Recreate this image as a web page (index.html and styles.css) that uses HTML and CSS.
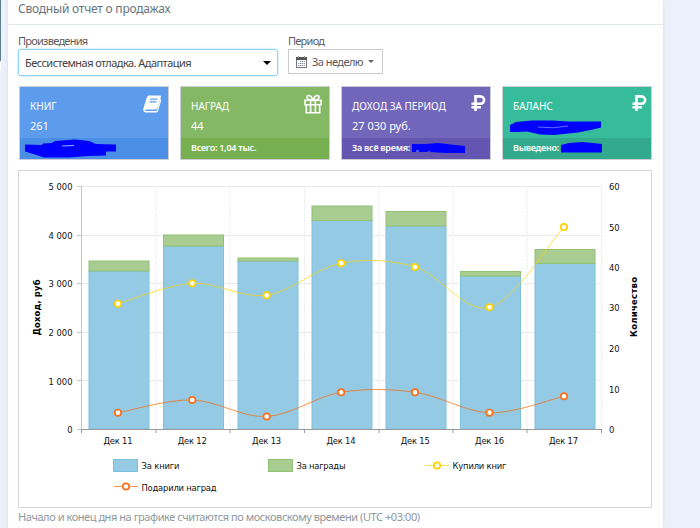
FILE: index.html
```
<!DOCTYPE html>
<html lang="ru">

	<head>
		<meta charset="UTF-8">
		<title>Сводный отчет о продажах</title>
		<link rel="stylesheet" href="styles.css">
	</head>

	<body>
		<div class="side"></div>
		<div class="panel">
			<div class="panel-head"><span class="panel-title">Сводный отчет о продажах</span></div>
			<div class="panel-body">
				<div class="filters">
					<div class="field">
						<label>Произведения</label>
						<div class="select">
							<span>Бессистемная отладка. Адаптация</span>
							<i class="caret"></i>
						</div>
					</div>
					<div class="field">
						<label>Период</label>
						<div class="period">
							<svg class="calendar" width="11" height="12" viewBox="0 0 11 12">
								<rect x="0.5" y="1.5" width="10" height="10" fill="#fff" stroke="#777" />
								<path d="M0 2.5h11" stroke="#555" stroke-width="3" />
								<path d="M2.5 0v2M8.5 0v2" stroke="#999" />
								<path d="M4 5.5h5M2 7.5h7M2 9.5h7" stroke="#8795a5" stroke-dasharray="1.4 .6" />
							</svg>
							<span>За неделю</span>
							<i class="caret small"></i>
						</div>
					</div>
				</div>

				<div class="tiles">
					<div class="tile blue">
						<div class="tile-body">
							<div class="tile-name">КНИГ</div>
							<div class="tile-value">261</div>
							<svg class="icon book" width="19" height="18" viewBox="0 0 19 18">
								<path fill="#fff" fill-rule="evenodd" d="M6.2 0.5h10.6q1.5 0 1.1 1.4L14.4 13q-.5 1.4-2 1.4H3.2q-1.2 0-1.2.8t1.2.8h9.8q.8 0 1-.8L17.5 4q1 .5.7 1.5L15 16q-.5 1.5-2 1.5H2.8Q.8 17.5.3 15.6q-.3-1 .1-2L3.8 2.4Q4.6.5 6.2.5zM7.4 3.6l-.4 1.2h7.2l.4-1.2zM6.6 6.2l-.4 1.2h7.2l.4-1.2z" />
							</svg>
						</div>
						<div class="tile-foot">Всего:</div>
						<svg class="ink" width="148" height="72" viewBox="20 87 148 72">
							<path d="M25 144.500l17 .500 1-1.500 9-.5 3-2 20-1.500 14 1.500 7 3 20 .5v7h-10v4l-18 .5-19 1.500H44l-9-3-10-3z" />
							<path d="M62 146l12-.5" stroke="#9bb2f7" />
						</svg>
					</div>
					<div class="tile green">
						<div class="tile-body">
							<div class="tile-name">НАГРАД</div>
							<div class="tile-value">44</div>
							<svg class="icon gift" width="18" height="20" viewBox="0 0 18 20" fill="none" stroke="#fff" stroke-width="1.6">
								<path d="M1 6.2h16v4.5H1zM2.3 10.7v8h13.4v-8M6.6 6.2v12M11.4 6.2v12" />
								<path d="M9 6C6.5 6 3 5.5 3 3.2 3 1 6.7.1 9 6c2.300-5.900 6-5 6-2.800C15 5.500 11.500 6 9 6z" />
							</svg>
						</div>
						<div class="tile-foot">Всего: 1,04 тыс.</div>
					</div>
					<div class="tile purple">
						<div class="tile-body">
							<div class="tile-name">ДОХОД ЗА ПЕРИОД</div>
							<div class="tile-value">27 030 руб.</div>
							<svg class="icon rub" width="15" height="16" viewBox="0 0 15 16" fill="none" stroke="#fff" stroke-width="2.6">
								<path d="M4.500 16V1.400h4.700c5.200 0 5.200 7.400 0 7.400H.5M.5 12.200h9.500" />
							</svg>
						</div>
						<div class="tile-foot">За всё время:</div>
						<svg class="ink" width="148" height="72" viewBox="342 87 148 72">
							<path d="M412 144h14l12-1 17 2 10 1v7h-19l-17-1h-17z" />
							<path d="M416 151h3M429 151v1" stroke="#9bb2f7" />
						</svg>
					</div>
					<div class="tile teal">
						<div class="tile-body">
							<div class="tile-name">БАЛАНС</div>
							<div class="tile-value"></div>
							<svg class="icon rub" width="15" height="16" viewBox="0 0 15 16" fill="none" stroke="#fff" stroke-width="2.6">
								<path d="M4.500 16V1.400h4.700c5.200 0 5.200 7.400 0 7.400H.5M.5 12.200h9.500" />
							</svg>
						</div>
						<div class="tile-foot">Выведено:</div>
						<svg class="ink" width="148" height="72" viewBox="503 87 148 72">
							<path d="M510 125l6-3 16-1.500h21l15 1h33v6l-8 2-15 3-24 2.500-14-.5-13-3-9 .5h-8z" />
							<path d="M538 127q16 2 30-1" fill="none" stroke="#8fa0ff" stroke-width=".7" />
							<path d="M561 145l8-2 13-1 11 1 9 1v8.500h-41z" />
						</svg>
					</div>
				</div>

				<div class="chart">
					<svg width="632" height="336" viewBox="19 171 632 336">
						<!-- grid -->
						<path class="grid" d="M81 186.500h520M81 235.500h520M81 283.500h520M81 332.500h520M81 380.500h520" />
						<path class="grid dash" d="M156 187v242M230 187v242M304.500 187v242M379 187v242M453 187v242M527 187v242M601.500 187v242" />
						<!-- left axis -->
						<path class="axis" d="M81.500 186v243M77 186.500h5M77 235.500h5M77 283.500h5M77 332.500h5M77 380.500h5M77 429.500h5" />

						<g class="books">
							<rect x="89" y="271" width="60" height="158" />
							<rect x="163.500" y="246" width="60" height="183" />
							<rect x="238" y="261" width="60" height="168" />
							<rect x="312" y="220.500" width="60" height="208.500" />
							<rect x="386" y="226" width="60" height="203" />
							<rect x="460.500" y="276" width="60" height="153" />
							<rect x="535" y="263.500" width="60" height="165.500" />
						</g>
						<g class="awards">
							<rect x="89" y="261" width="60" height="10" />
							<rect x="163.500" y="235" width="60" height="11" />
							<rect x="238" y="258" width="60" height="3" />
							<rect x="312" y="206" width="60" height="14.500" />
							<rect x="386" y="211.500" width="60" height="14.500" />
							<rect x="460.500" y="271.500" width="60" height="4.500" />
							<rect x="535" y="249.500" width="60" height="14" />
						</g>
						<path class="axis bottom" d="M81 429.500h521M81.500 429v4M156 429v4M230 429v4M304.500 429v4M379 429v4M453 429v4M527 429v4M601.500 429v4" />

						<path class="line yellow" d="M118 303.700C130.400 300.300 167.500 284.700 192.300 283.300S241.800 298.700 266.600 295.300 316.200 267.900 341 263.200 390.500 259.700 415.300 267 464.800 314 489.600 307.300 551.600 240.400 564 227" />
						<path class="line orange" d="M118 412.700C130.400 410.600 167.500 399.400 192.300 400S241.800 417.800 266.600 416.500 316.200 396.300 341 392.300 390.500 388.900 415.300 392.300 464.800 412 489.600 412.700 551.600 399 564 396.300" />
						<g class="dots yellow">
							<circle cx="118" cy="303.700" r="3.200" />
							<circle cx="192.300" cy="283.300" r="3.200" />
							<circle cx="266.700" cy="295.300" r="3.200" />
							<circle cx="341.200" cy="263.200" r="3.200" />
							<circle cx="415" cy="267" r="3.200" />
							<circle cx="489.500" cy="307.300" r="3.200" />
							<circle cx="564" cy="227" r="3.200" />
						</g>
						<g class="dots orange">
							<circle cx="118" cy="412.700" r="3.200" />
							<circle cx="192.300" cy="400" r="3.200" />
							<circle cx="266.700" cy="416.500" r="3.200" />
							<circle cx="341.200" cy="392.300" r="3.200" />
							<circle cx="415" cy="392.300" r="3.200" />
							<circle cx="489.500" cy="412.700" r="3.200" />
							<circle cx="564" cy="396.300" r="3.200" />
						</g>

						<g class="left">
							<text x="72.500" y="190">5 000</text>
							<text x="72.500" y="238.500">4 000</text>
							<text x="72.500" y="287">3 000</text>
							<text x="72.500" y="335.500">2 000</text>
							<text x="72.500" y="384.500">1 000</text>
							<text x="72.500" y="432.500">0</text>
						</g>
						<g class="right">
							<text x="609" y="190">60</text>
							<text x="609" y="230.500">50</text>
							<text x="609" y="271">40</text>
							<text x="609" y="311">30</text>
							<text x="609" y="352">20</text>
							<text x="609" y="392.500">10</text>
							<text x="609" y="432.500">0</text>
						</g>
						<g class="days">
							<text x="118" y="443.500" textLength="29">Дек 11</text>
							<text x="192.300" y="443.500" textLength="29">Дек 12</text>
							<text x="266.600" y="443.500" textLength="29">Дек 13</text>
							<text x="341" y="443.500" textLength="29">Дек 14</text>
							<text x="415.300" y="443.500" textLength="29">Дек 15</text>
							<text x="489.600" y="443.500" textLength="29">Дек 16</text>
							<text x="563.500" y="443.500" textLength="29">Дек 17</text>
						</g>
						<text class="axis-name" transform="translate(39.500 335.500) rotate(-90)" textLength="56">Доход, руб</text>
						<text class="axis-name" transform="translate(636.500 337) rotate(-90)" textLength="60">Количество</text>

						<!-- legend -->
						<g class="books"><rect x="113.500" y="459.500" width="24" height="12" /></g>
						<g class="awards"><rect x="268.500" y="459.500" width="24" height="12" /></g>
						<path class="line yellow" d="M425 465.500h24" />
						<path class="line orange" d="M114 486.500h24" />
						<g class="dots yellow"><circle cx="437" cy="465.500" r="3.200" /></g>
						<g class="dots orange"><circle cx="126" cy="486.500" r="3.200" /></g>
						<text x="141.500" y="469" textLength="38">За книги</text>
						<text x="296.500" y="469" textLength="49">За награды</text>
						<text x="452.500" y="469" textLength="54">Купили книг</text>
						<text x="141.500" y="490.500" textLength="75">Подарили наград</text>
					</svg>
				</div>
				<div class="note"><span>Начало и конец дня на графике считаются по московскому времени (UTC +03:00)</span></div>
			</div>
		</div>
	</body>

</html>
```
FILE: styles.css
```
* {
	margin: 0;
	padding: 0;
	box-sizing: border-box;
}

body {
	display: flex;
	width: 700px;
	height: 528px;
	overflow: hidden;
	background-color: #ecf0fa;
	font-family: "Noto Sans", "Open Sans", sans-serif;
	font-size: 11px;
	color: #5c5c5c;
}

.side {
	width: 1px;
	height: 70px;
	margin-right: 7px;
	background-color: #5b7f8c;
	border-bottom: 9px solid #fff;
}

.panel {
	width: 655px;
	height: 528px;
	background-color: #fff;
	box-shadow: 0 0 3px #d5dae6;
}

.panel-head {
	height: 25px;
	padding-left: 10px;
	border-bottom: 1px solid #e3eaec;
	font-size: 12px;
	line-height: 17px;
	letter-spacing: -.22px;
	color: #66757d;
}

.panel-body {
	padding: 9px 11px 0 10px;
}

.filters {
	display: flex;
	gap: 10px;
	height: 52px;
	letter-spacing: -.55px;
}

.field label {
	display: block;
	height: 15px;
	line-height: 14px;
	letter-spacing: -.75px;
	white-space: nowrap;
}

.select {
	display: flex;
	align-items: center;
	justify-content: space-between;
	width: 260px;
	height: 27px;
	padding: 0 6px;
	border: 1px solid #8ed5f5;
	border-radius: 3px;
	box-shadow: 0 0 2px #8ed5f5;
	color: #444;
}

.caret {
	border-top: 4px solid #000;
	border-left: 4px solid transparent;
	border-right: 4px solid transparent;
}

.caret.small {
	border-width: 3px 3px 0;
	border-top-color: #666;
}

.period {
	display: flex;
	align-items: center;
	width: 95px;
	height: 25px;
	padding: 0 7px;
	border: 1px solid #ccc;
	white-space: nowrap;
}

.calendar {
	flex: none;
}

.period span {
	margin: 0 5px;
}

.tiles {
	display: grid;
	grid-template-columns: repeat(4, 1fr);
	gap: 11px;
	margin-left: 1px;
}

.tile {
	position: relative;
	height: 74px;
	border: 1px solid #ccced4;
	color: #fff;
}

.tile-body {
	position: relative;
	height: 51px;
	padding: 11px 10px 0;
}

.tile-name {
	height: 17px;
	font-size: 10px;
	line-height: 17px;
	white-space: nowrap;
}

.tile-value {
	height: 21px;
	font-size: 11px;
	line-height: 21px;
}

.tile-foot {
	height: 21px;
	padding-left: 10px;
	font-size: 9px;
	font-weight: 600;
	line-height: 20px;
	letter-spacing: -.25px;
}

.icon {
	position: absolute;
	top: 8px;
	right: 6px;
}

.gift {
	top: 7px;
	right: 7px;
}

.rub {
	right: 4px;
}

.ink {
	position: absolute;
	top: 0;
	left: 0;
	fill: #00f;
}

.blue { background-color: #5d9cec; }
.blue .tile-foot { background-color: #4a8fe5; }
.green { background-color: #85b864; }
.green .tile-foot { background-color: #76b050; }
.purple { background-color: #7266ba; }
.purple .tile-foot { background-color: #6455b1; }
.teal { background-color: #37bc9b; }
.teal .tile-foot { background-color: #33aa8d; }

.chart {
	height: 338px;
	margin-top: 10px;
	border: 1px solid #d6d6d6;
}

.chart svg {
	display: block;
}

.chart text {
	font-family: "DejaVu Sans", sans-serif;
	font-size: 8.4px;
	fill: #111;
}

.grid {
	fill: none;
	stroke: #ebebeb;
}

.dash {
	stroke-dasharray: 2 1;
}

.axis {
	fill: none;
	stroke: #c4c4c4;
}

.bottom {
	stroke: #999;
}

.books rect {
	fill: #95cae4;
	stroke: #7fc0df;
}

.awards rect {
	fill: #a9cd91;
	stroke: #91c077;
}

.line {
	fill: none;
	stroke-width: 1;
}

.line.yellow { stroke: #fcd202; stroke-opacity: .7; }
.line.orange { stroke: #ff6600; stroke-opacity: .7; }

.dots circle {
	fill: #fff;
	stroke-width: 1.7;
}

.dots.yellow circle { stroke: #fcd202; }
.dots.orange circle { stroke: #f8701c; }

.left text {
	text-anchor: end;
}

.days text {
	text-anchor: middle;
}

.chart .axis-name {
	font-weight: bold;
	fill: #000;
}

.note {
	height: 18px;
	line-height: 17px;
	letter-spacing: -.44px;
	color: #8f989e;
	white-space: nowrap;
}
```
